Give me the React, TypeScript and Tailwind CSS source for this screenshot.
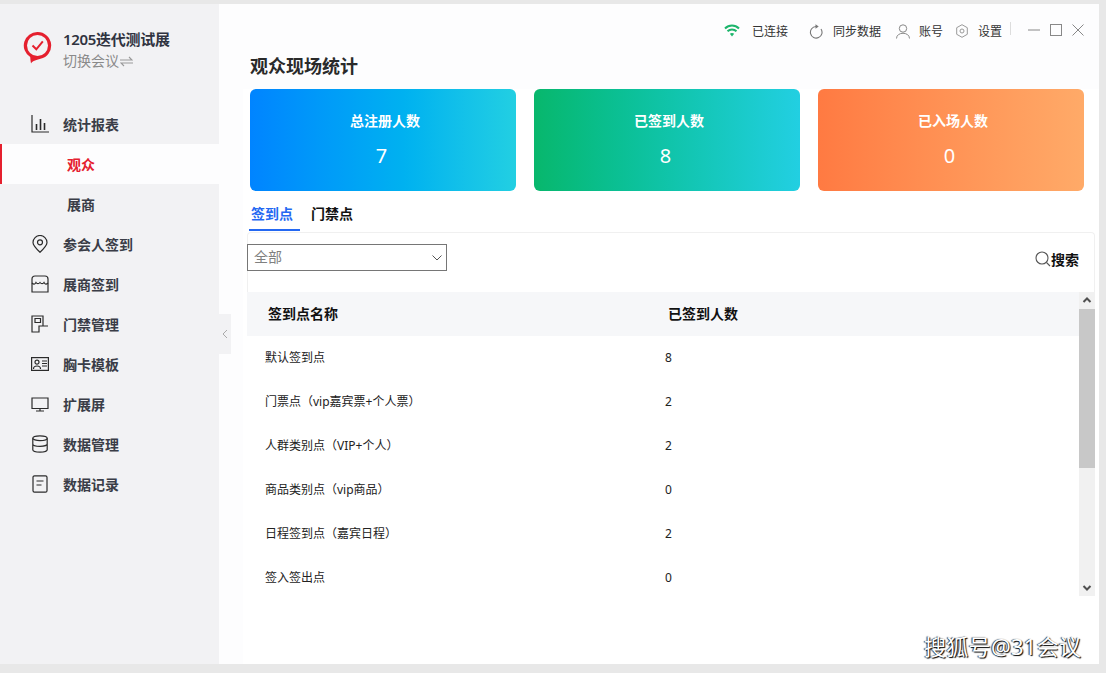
import type { ReactNode } from 'react'

const cn = 'fill-none stroke-[#2b2b2b] stroke-[1.2]'

const NAV_ICONS: Record<string, ReactNode> = {
  chart: (
    <svg width="18" height="18" viewBox="0 0 18 18" className={cn}>
      <path d="M1 0v17h17" />
      <path d="M5.500 9v6M9.500 4v11M13.500 8v7" strokeWidth="1.600" />
    </svg>
  ),
  pin: (
    <svg width="16" height="18" viewBox="0 0 16 18" className={cn}>
      <path d="M8 17.300C4 13.500 1 10.500 1 7.500a7 7 0 0 1 14 0c0 3-3 6-7 9.800z" />
      <circle cx="8" cy="7.300" r="2.500" />
    </svg>
  ),
  shop: (
    <svg width="18" height="18" viewBox="0 0 18 18" className={cn}>
      <path d="M4 1h10c2 0 3 1.500 3 3v13H1V4c0-1.500 1-3 3-3z" />
      <path d="M1 8c1.500 1.500 3 1.500 4-.5 1 1.500 2.800 1.500 4 0 1.200 1.500 3 1.500 4 0 1 2 2.500 2 4 .5" />
    </svg>
  ),
  door: (
    <svg width="18" height="18" viewBox="0 0 18 18" className={cn}>
      <path d="M12 11V1H1v16h7v-6h9" />
      <path d="M4 3.500h5.500v4H4z" />
    </svg>
  ),
  badge: (
    <svg width="18" height="14" viewBox="0 0 18 14" className={cn}>
      <rect x=".6" y=".6" width="16.800" height="12.800" />
      <circle cx="6" cy="5.200" r="2" />
      <path d="M2.500 12c0-4 7-4 7 0M11 4h5M11 6.500h5M11 9h5" />
    </svg>
  ),
  screen: (
    <svg width="18" height="15" viewBox="0 0 18 15" className={cn}>
      <path d="M1 1h16v10.500H1zM9 11.500V14M5 14h8" />
    </svg>
  ),
  db: (
    <svg width="16" height="18" viewBox="0 0 16 18" className={cn}>
      <ellipse cx="8" cy="3.200" rx="7.200" ry="2.400" />
      <path d="M.8 3.200v11.600c0 1.300 3.200 2.400 7.200 2.400s7.200-1.100 7.200-2.400V3.200M.8 9c0 1.300 3.200 2.400 7.200 2.400s7.200-1.100 7.200-2.400" />
    </svg>
  ),
  record: (
    <svg width="16" height="18" viewBox="0 0 16 18" className={cn}>
      <rect x="1" y=".8" width="14" height="16.400" rx="1.500" />
      <path d="M4.500 6h7M4.500 10h5" />
    </svg>
  ),
}

const NAV_ITEMS = [
  { label: '统计报表', icon: 'chart' },
  { label: '观众', active: true },
  { label: '展商' },
  { label: '参会人签到', icon: 'pin' },
  { label: '展商签到', icon: 'shop' },
  { label: '门禁管理', icon: 'door' },
  { label: '胸卡模板', icon: 'badge' },
  { label: '扩展屏', icon: 'screen' },
  { label: '数据管理', icon: 'db' },
  { label: '数据记录', icon: 'record' },
]

const ROWS = [
  { name: '默认签到点', count: 8 },
  { name: '门票点（vip嘉宾票+个人票）', count: 2 },
  { name: '人群类别点（VIP+个人）', count: 2 },
  { name: '商品类别点（vip商品）', count: 0 },
  { name: '日程签到点（嘉宾日程）', count: 2 },
  { name: '签入签出点', count: 0 },
]

function Sidebar() {
  return (
    <aside className="flex w-[219px] shrink-0 flex-col bg-[#f2f2f4]">
      <div className="flex h-[100px] pl-[23px] pt-[27px]">
        <svg width="29" height="33" viewBox="0 0 29 33" className="shrink-0">
          <path
            d="M14.500 1a13.500 13.500 0 0 1 3 26.700C13 29 9 30 8 32.500c-.4-2-.6-4-.8-6.500A13.500 13.500 0 0 1 14.500 1z"
            fill="#e5202e"
          />
          <circle cx="14.500" cy="14.500" r="10.500" fill="#f2f2f4" />
          <path d="M9.500 14.500l3.800 3.800 6.500-8" fill="none" stroke="#e5202e" strokeWidth="2" />
        </svg>
        <div className="ml-[11px]">
          <div className="mt-[-2px] text-[15px] font-semibold leading-[20px] tracking-[-0.3px] text-[#2f3340]">1205迭代测试展</div>
          <div className="mt-[2px] flex items-center text-[14px] leading-[20px] text-[#8a8a8a]">
            切换会议
            <svg width="13" height="11" viewBox="0 0 13 11" className="ml-[1px] fill-none stroke-[#999] stroke-[1.1]">
              <path d="M0 4h12L9 1M13 7H1l3 3" />
            </svg>
          </div>
        </div>
      </div>
      <nav>
        {NAV_ITEMS.map((item) => (
          <div
            key={item.label}
            className={
              item.active
                ? 'flex h-[40px] items-center border-l-2 border-[#e5202e] bg-[#fdfdfe] pl-[65px] text-[14px] font-semibold text-[#e5202e]'
                : item.icon
                  ? 'flex h-[40px] items-center text-[14px] font-semibold text-[#3a3d47]'
                  : 'flex h-[40px] items-center pl-[67px] text-[14px] font-semibold text-[#3a3d47]'
            }
          >
            {item.icon && <span className="flex w-[63px] shrink-0 justify-center pl-[16px]">{NAV_ICONS[item.icon]}</span>}
            {item.label}
          </div>
        ))}
      </nav>
    </aside>
  )
}

function TopBar() {
  return (
    <header className="flex h-[52px] items-center justify-end pr-[15px] text-[12px] text-[#333]">
      <svg width="16" height="13" viewBox="0 0 16 13" className="fill-none stroke-[#1db56c] stroke-[2]">
        <path d="M1 4.500c4-4 10-4 14 0M3.500 7.300c2.500-2.400 6.500-2.400 9 0" />
        <path d="M8 12.500L5.800 9.800c1.300-1 3.100-1 4.400 0z" fill="#1db56c" stroke="none" />
      </svg>
      <span className="ml-[12px] mt-[4px]">已连接</span>
      <svg width="14" height="15" viewBox="0 0 14 15" className="ml-[21px] mt-[2px] fill-none stroke-[#777] stroke-[1.1]">
        <path d="M7 2.500a5.800 5.800 0 1 0 5 2.500" />
        <path d="M6.500.3l3.200 2.200-3.200 2.200z" fill="#777" stroke="none" />
      </svg>
      <span className="ml-[10px] mt-[4px]">同步数据</span>
      <svg width="14" height="15" viewBox="0 0 14 15" className="ml-[15px] mt-[2px] fill-none stroke-[#888] stroke-[1]">
        <circle cx="7" cy="4.500" r="3.700" />
        <path d="M.5 14.500c0-7 13-7 13 0" />
      </svg>
      <span className="ml-[9px] mt-[4px]">账号</span>
      <svg width="12" height="14" viewBox="0 0 12 14" className="ml-[13px] mt-[2px] fill-none stroke-[#999] stroke-[1]">
        <path d="M6 .7l5.300 3v6.600L6 13.300.7 10.300V3.700z" />
        <circle cx="6" cy="7" r="2" />
      </svg>
      <span className="ml-[10px] mt-[4px]">设置</span>
      <span className="ml-[8px] mr-[17px] mt-[-4px] h-[13px] w-px bg-[#ddd]" />
      <svg width="12" height="12" viewBox="0 0 12 12" className="mt-[-1px] fill-none stroke-[#888]">
        <path d="M0 6h12" />
      </svg>
      <svg width="12" height="12" viewBox="0 0 12 12" className="ml-[10px] mt-[-1px] fill-none stroke-[#888]">
        <rect x=".5" y=".5" width="11" height="11" />
      </svg>
      <svg width="12" height="12" viewBox="0 0 12 12" className="ml-[10px] mt-[-1px] fill-none stroke-[#888]">
        <path d="M.5.500l11 11M11.500.500l-11 11" />
      </svg>
    </header>
  )
}

function StatCard({ title, value, gradient }: { title: string; value: number; gradient: string }) {
  return (
    <div className={`flex h-[102px] w-[266px] flex-col items-center rounded-[6px] pt-[22px] text-white ${gradient}`}>
      <div className="ml-[4px] text-[14px] font-semibold leading-[20px]">{title}</div>
      <div className="mr-[3px] mt-[13px] text-[20px] leading-[24px]">{value}</div>
    </div>
  )
}

function SignInTable() {
  return (
    <div className="flex h-[304px]">
      <div className="min-w-0 flex-1 overflow-hidden">
        <div className="grid h-[44px] grid-cols-[421px_1fr] items-center bg-[#f6f7f9] pb-[2px] text-[14px] font-semibold text-[#111]">
          <span className="pl-[21px]">签到点名称</span>
          <span>已签到人数</span>
        </div>
        {ROWS.map((row) => (
          <div key={row.name} className="grid h-[44px] grid-cols-[418px_1fr] items-center text-[12px] text-[#222]">
            <span className="pl-[18px]">{row.name}</span>
            <span>{row.count}</span>
          </div>
        ))}
      </div>
      <div className="flex w-[16px] shrink-0 flex-col items-center bg-[#f1f1f1]">
        <svg width="16" height="17" viewBox="0 0 16 17" className="shrink-0 fill-none stroke-[#505050] stroke-[2]">
          <path d="M4.500 10L8 6.500l3.500 3.500" />
        </svg>
        <div className="h-[159px] w-full bg-[#c8c8c8]" />
        <div className="flex-1" />
        <svg width="16" height="17" viewBox="0 0 16 17" className="shrink-0 fill-none stroke-[#505050] stroke-[2]">
          <path d="M4.500 7L8 10.500 11.500 7" />
        </svg>
      </div>
    </div>
  )
}

export default function App() {
  return (
    <div className="relative h-[673px] w-[1106px] overflow-hidden bg-[#e8e8e8] pb-[9px] pr-[7px] pt-[4px] font-['Noto_Sans','Noto_Sans_CJK_SC',sans-serif]">
      <div className="relative flex h-full">
        <Sidebar />
        <main className="flex min-w-0 flex-1 flex-col bg-[#fdfdfe]">
          <TopBar />
          <h1 className="ml-[31px] h-[33px] text-[18px] font-semibold leading-[20px] text-[#2a2a2a]">观众现场统计</h1>
          <div className="ml-[24px] flex-1 bg-white">
            <div className="flex gap-[18px] pl-[7px]">
              <StatCard title="总注册人数" value={7} gradient="bg-gradient-to-r from-[#0084ff] to-[#22cfe2]" />
              <StatCard title="已签到人数" value={8} gradient="bg-gradient-to-r from-[#08b76c] to-[#22cfe2]" />
              <StatCard title="已入场人数" value={0} gradient="bg-gradient-to-r from-[#ff7a42] to-[#ffaa68]" />
            </div>
            <div className="ml-[6px] mt-[10px] flex h-[31px] text-[14px] font-semibold">
              <span className="h-[30px] border-b-[2px] border-[#2468f2] pl-[2px] pr-[7px] pt-[2px] text-[#2468f2]">签到点</span>
              <span className="ml-[11px] pt-[2px] text-[#111]">门禁点</span>
            </div>
            <div className="ml-[4px] w-[848px]">
              <div className="flex h-[60px] rounded-t-[4px] border-x border-t border-[#f0f0f0] pt-[11px]">
                <div className="ml-[-1px] flex h-[27px] w-[200px] items-center justify-between border border-[#767676] pb-[3px] pl-[6px] pr-[4px] text-[14px] text-[#808080]">
                  全部
                  <svg width="10" height="6" viewBox="0 0 10 6" className="mt-[3px] fill-none stroke-[#555]">
                    <path d="M.5.500L5 5 9.500.500" />
                  </svg>
                </div>
                <div className="ml-auto mr-[15px] mt-[4px] flex h-[22px] items-center text-[14px] font-semibold text-[#111]">
                  <svg width="16" height="16" viewBox="0 0 16 16" className="fill-none stroke-[#555] stroke-[1.1]">
                    <circle cx="7" cy="7" r="6" />
                    <path d="M11.500 11.500L15 15" />
                  </svg>
                  搜索
                </div>
              </div>
              <SignInTable />
            </div>
          </div>
        </main>
        <div className="absolute left-[219px] top-[310px] flex h-[40px] w-[12px] items-center justify-center bg-[#f2f2f4]">
          <svg width="6" height="10" viewBox="0 0 6 10" className="fill-none stroke-[#aaa]">
            <path d="M5 1L1 5l4 4" />
          </svg>
        </div>
      </div>
      <div className="absolute left-[924px] top-[631px] text-[22px] leading-[30px] tracking-[0.3px] text-white [text-shadow:1px_1px_1px_#000,-1px_0_1px_#333]">
        搜狐号@31会议
      </div>
    </div>
  )
}
